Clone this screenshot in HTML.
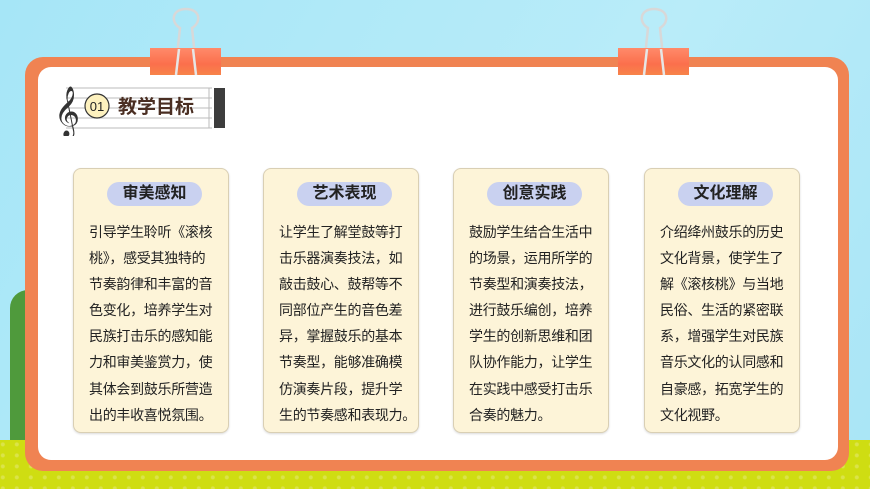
<!DOCTYPE html>
<html><head><meta charset="utf-8">
<style>
*{margin:0;padding:0;box-sizing:border-box}
body{width:870px;height:489px;overflow:hidden;position:relative;font-family:"Liberation Sans","Noto Sans CJK SC",sans-serif;background:linear-gradient(120deg,#a6e6f7 0%,#b9ecf9 60%,#a9e5f6 100%)}
.grass{position:absolute;left:0;top:440px;width:870px;height:49px;background:#cfdd12;background-image:radial-gradient(circle at 20% 40%,#dbe34a 1.5px,transparent 2.5px);background-size:14px 11px}
.tree{position:absolute;left:10px;top:290px;width:36px;height:160px;background:#4f9a3c;border-radius:18px 18px 4px 4px}
.board{position:absolute;left:25px;top:57px;width:824px;height:414px;background:#f08352;border-radius:18px}
.inner{position:absolute;left:38px;top:67px;width:800px;height:393px;background:#fff;border-radius:13px}
.clip{position:absolute;top:48px;width:71px;height:27px;background:linear-gradient(#ff8a6a,#fb6f4c 60%,#f7844a);}
.clipw{position:absolute;top:6px;}
.card{position:absolute;top:168px;width:156px;height:265px;background:#fdf4d8;border:1px solid #d9cfb4;border-radius:8px;box-shadow:0 1px 2px rgba(0,0,0,.15)}
.pill{position:absolute;left:33px;top:13px;width:95px;height:24px;border-radius:12px;background:#c9d1f0;text-align:center;font-weight:bold;font-size:16px;line-height:24px;color:#222}
.txt{position:absolute;left:15px;top:50px;font-size:14px;line-height:26.1px;color:#222;white-space:nowrap;letter-spacing:-0.3px}
</style></head><body>
<div class="tree"></div>
<div class="grass"></div>
<div class="board"></div>
<div class="inner"></div>
<svg class="clipw" style="left:168px" width="36" height="69" viewBox="0 0 36 69"><path d="M7 69 L12 22 C2 16 4 3 18 3 C32 3 34 16 24 22 L29 69" fill="none" stroke="#d8d8d8" stroke-width="2.5"/></svg>
<div class="clip" style="left:150px"></div>
<svg class="clipw" style="left:168px;top:49px" width="36" height="26" viewBox="0 49 36 26"><path d="M11 49 L8 75 M25 49 L28 75" stroke="#e6e6e6" stroke-width="2.5"/></svg>
<svg class="clipw" style="left:636px" width="36" height="69" viewBox="0 0 36 69"><path d="M7 69 L12 22 C2 16 4 3 18 3 C32 3 34 16 24 22 L29 69" fill="none" stroke="#d8d8d8" stroke-width="2.5"/></svg>
<div class="clip" style="left:618px"></div>
<svg class="clipw" style="left:636px;top:49px" width="36" height="26" viewBox="0 49 36 26"><path d="M11 49 L8 75 M25 49 L28 75" stroke="#e6e6e6" stroke-width="2.5"/></svg>
<svg style="position:absolute;left:52px;top:84px" width="175" height="52" viewBox="0 0 175 52">
<g stroke="#bbb" stroke-width="1"><line x1="14" y1="4" x2="160" y2="4"/><line x1="14" y1="14" x2="160" y2="14"/><line x1="14" y1="24" x2="160" y2="24"/><line x1="14" y1="34" x2="160" y2="34"/><line x1="14" y1="44" x2="160" y2="44"/><line x1="157" y1="4" x2="157" y2="44"/></g>
<rect x="162" y="4" width="11" height="40" fill="#3d3d3d"/>
<text x="2" y="42" font-size="44" fill="#333" font-family="DejaVu Sans">𝄞</text>
<circle cx="45" cy="22" r="12" fill="#fdf1be" stroke="#333" stroke-width="1.2"/>
<text x="45" y="27" text-anchor="middle" font-size="13" fill="#222" font-family="Liberation Sans">01</text>
<text x="66" y="29" font-size="19" font-weight="bold" fill="#4a2e22" font-family="Liberation Sans,Noto Sans CJK SC,sans-serif">教学目标</text>
</svg>
<div class="card" style="left:73px"><div class="pill">审美感知</div><div class="txt">引导学生聆听《滚核<br>桃》，感受其独特的<br>节奏韵律和丰富的音<br>色变化，培养学生对<br>民族打击乐的感知能<br>力和审美鉴赏力，使<br>其体会到鼓乐所营造<br>出的丰收喜悦氛围。</div></div>
<div class="card" style="left:263px"><div class="pill">艺术表现</div><div class="txt">让学生了解堂鼓等打<br>击乐器演奏技法，如<br>敲击鼓心、鼓帮等不<br>同部位产生的音色差<br>异，掌握鼓乐的基本<br>节奏型，能够准确模<br>仿演奏片段，提升学<br>生的节奏感和表现力。</div></div>
<div class="card" style="left:453px"><div class="pill">创意实践</div><div class="txt">鼓励学生结合生活中<br>的场景，运用所学的<br>节奏型和演奏技法，<br>进行鼓乐编创，培养<br>学生的创新思维和团<br>队协作能力，让学生<br>在实践中感受打击乐<br>合奏的魅力。</div></div>
<div class="card" style="left:644px"><div class="pill">文化理解</div><div class="txt">介绍绛州鼓乐的历史<br>文化背景，使学生了<br>解《滚核桃》与当地<br>民俗、生活的紧密联<br>系，增强学生对民族<br>音乐文化的认同感和<br>自豪感，拓宽学生的<br>文化视野。</div></div>
</body></html>
